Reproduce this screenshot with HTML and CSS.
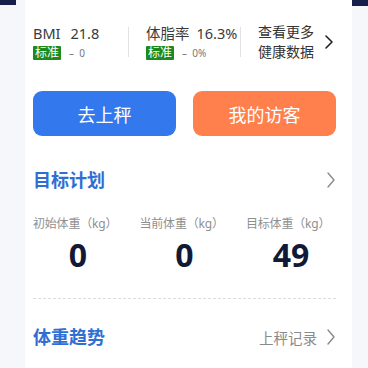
FILE: index.html
```html
<!DOCTYPE html>
<html lang="zh">
<head>
<meta charset="utf-8">
<link rel="stylesheet" href="styles.css">
</head>
<body>
<div class="page">
  <div class="side left"><div class="navy navy-l"></div></div>
  <main class="card">
    <section class="stats">
      <div class="stat s1">
        <div class="line1"><span class="k">BMI</span><span class="v">21.8</span></div>
        <div class="line2"><span class="badge">标准</span><span class="delta">–&nbsp;&nbsp;0</span></div>
      </div>
      <div class="vdiv"></div>
      <div class="stat s2">
        <div class="line1"><span class="k">体脂率</span><span class="v">16.3%</span></div>
        <div class="line2"><span class="badge">标准</span><span class="delta">–&nbsp;&nbsp;0%</span></div>
      </div>
      <div class="vdiv"></div>
      <div class="more">
        <div class="more-text">查看更多<br>健康数据</div>
        <svg class="chev dark" width="10" height="16" viewBox="0 0 10 16"><path d="M2 2 L8 8 L2 14" fill="none" stroke="#222" stroke-width="1.6" stroke-linecap="round" stroke-linejoin="round"/></svg>
      </div>
    </section>

    <section class="buttons">
      <button class="btn blue">去上秤</button>
      <button class="btn orange">我的访客</button>
    </section>

    <section class="head head1">
      <h2 class="title">目标计划</h2>
      <svg class="chev" width="10" height="18" viewBox="0 0 10 18"><path d="M2 2 L8 9 L2 16" fill="none" stroke="#8a8a8a" stroke-width="1.4" stroke-linecap="round" stroke-linejoin="round"/></svg>
    </section>

    <section class="goals">
      <div class="goal"><div class="lbl">初始体重（kg）</div><div class="num">0</div></div>
      <div class="goal"><div class="lbl">当前体重（kg）</div><div class="num">0</div></div>
      <div class="goal last"><div class="lbl">目标体重（kg）</div><div class="num">49</div></div>
    </section>

    <div class="dash"></div>

    <section class="head head2">
      <h2 class="title">体重趋势</h2>
      <div class="link"><span>上秤记录</span>
        <svg class="chev" width="10" height="18" viewBox="0 0 10 18"><path d="M2 2 L8 9 L2 16" fill="none" stroke="#8a8a8a" stroke-width="1.4" stroke-linecap="round" stroke-linejoin="round"/></svg>
      </div>
    </section>
  </main>
  <div class="side right"><div class="navy navy-r"></div></div>
</div>
</body>
</html>
```
FILE: styles.css
```css
* { box-sizing: border-box; margin: 0; padding: 0; }
html, body { width: 368px; height: 368px; overflow: hidden; }
body {
  background: #f5f7fb;
  font-family: "Noto Sans", "Noto Sans CJK SC", sans-serif;
  color: #333;
}
.page { display: flex; height: 368px; }
.side { flex: none; }
.left { width: 25px; }
.right { width: 16px; display: flex; justify-content: flex-end; }
.navy { background: #14204a; }
.navy-l { width: 16px; height: 5px; }
.navy-r { width: 16px; height: 6px; }
.card {
  flex: none;
  width: 327px;
  height: 368px;
  background: #fff;
  padding: 22px 16px 0 8px;
}
.stats { display: flex; align-items: center; height: 40px; }
.stat { display: flex; flex-direction: column; }
.s1 { width: 95px; }
.s2 { width: 94px; margin-left: 17px; }
.line1 { font-size: 14.5px; line-height: 19px; color: #3a3a3a; display: flex; gap: 10px; white-space: nowrap; }
.s2 .line1 { gap: 7px; }
.line2 { display: flex; align-items: center; margin-top: 3px; }
.badge {
  background: #1c8a1f; color: #fff; font-size: 12px; line-height: 14px;
  padding: 0 2px; border-radius: 1px;
}
.delta { font-size: 10px; color: #777; margin-left: 8px; line-height: 14px; }
.vdiv { width: 1px; height: 30px; background: #e2e2e2; flex: none; }
.more { display: flex; align-items: center; margin-left: 17px; }
.more-text { font-size: 14px; line-height: 20px; color: #333; }
.chev.dark { margin-left: 10px; }
.buttons { display: flex; gap: 17px; margin-top: 29px; }
.btn {
  flex: 1; height: 45px; border: none; border-radius: 9px;
  color: #fff; font-size: 18px; font-family: inherit;
}
.blue { background: #3378ec; }
.orange { background: #ff804d; }
.head { display: flex; align-items: center; justify-content: space-between; }
.head1 { margin-top: 31px; }
.title { font-size: 18px; font-weight: 700; color: #2f6fd3; line-height: 26px; }
.goals { display: flex; margin-top: 22px; }
.goal { width: 107px; display: flex; flex-direction: column; align-items: flex-start; }
.goal.last { flex: 1; width: auto; }
.lbl { font-size: 12px; color: #8f8f8f; line-height: 18px; white-space: nowrap; letter-spacing: -0.2px; }
.num {
  font-size: 32px; font-weight: 700; color: #101a38; line-height: 36px;
  margin-top: 4px; width: 90px; text-align: center;
}
.dash { margin-top: 25px; border-top: 1px dashed #dcdcdc; }
.head2 { margin-top: 25px; }
.link { display: flex; align-items: center; gap: 9px; font-size: 14.5px; color: #8a8a8a; }
```
